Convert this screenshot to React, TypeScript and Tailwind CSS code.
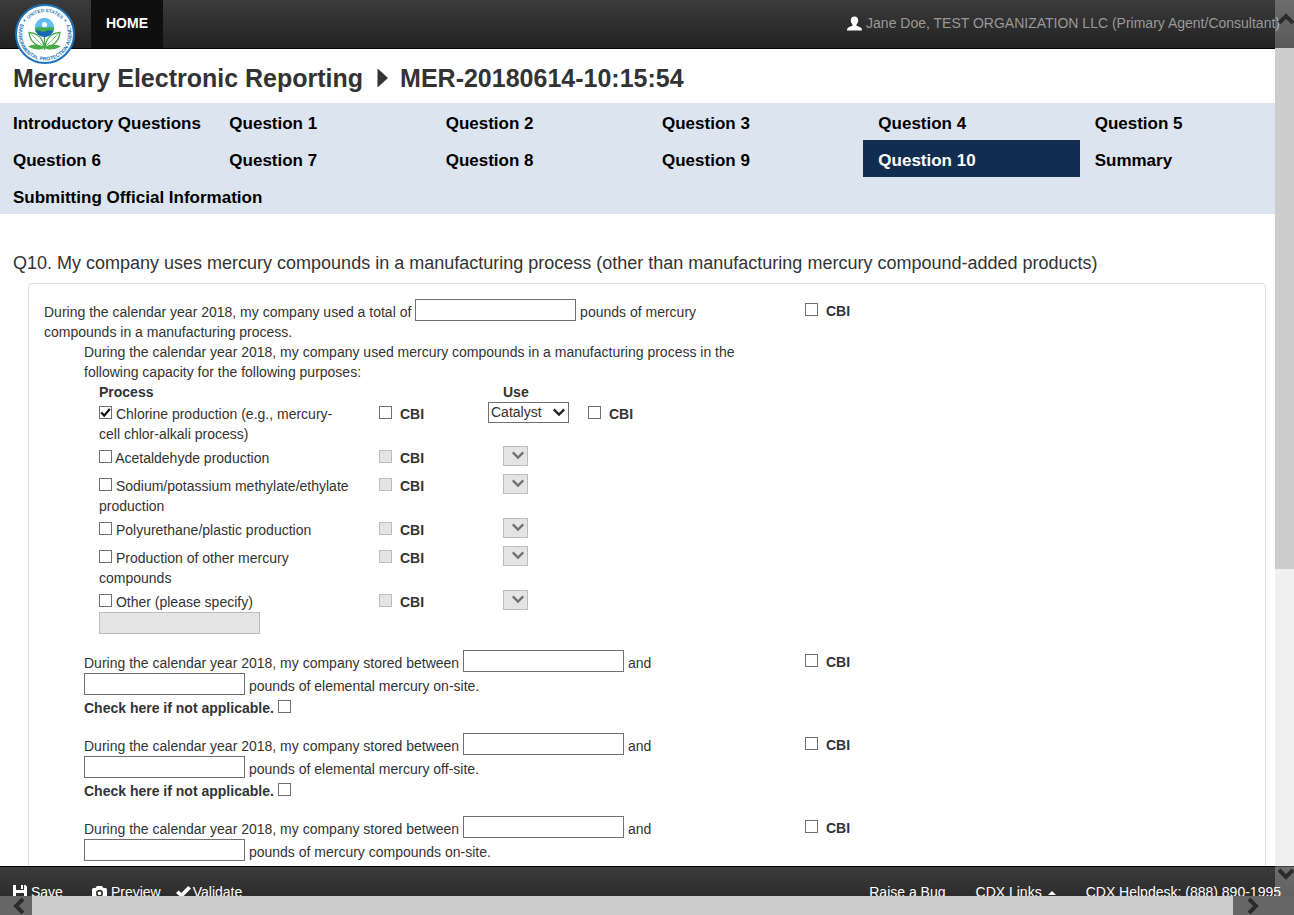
import type { ReactNode } from "react";

interface ProcessRow {
  id: string;
  label: string;
  use?: string;
  specify?: boolean;
}

interface StorageRow {
  id: string;
  text: string;
  optional?: boolean;
}

const NAV_ITEMS = [
  "Introductory Questions",
  "Question 1",
  "Question 2",
  "Question 3",
  "Question 4",
  "Question 5",
  "Question 6",
  "Question 7",
  "Question 8",
  "Question 9",
  "Question 10",
  "Summary",
  "Submitting Official Information",
];

const ACTIVE_ITEM = "Question 10";

const PROCESSES: ProcessRow[] = [
  { id: "chlorine", label: "Chlorine production (e.g., mercury-cell chlor-alkali process)", use: "Catalyst" },
  { id: "acetaldehyde", label: "Acetaldehyde production" },
  { id: "methylate", label: "Sodium/potassium methylate/ethylate production" },
  { id: "polyurethane", label: "Polyurethane/plastic production" },
  { id: "compounds", label: "Production of other mercury compounds" },
  { id: "other", label: "Other (please specify)", specify: true },
];

const STORAGE: StorageRow[] = [
  { id: "elemental-on", text: "pounds of elemental mercury on-site.", optional: true },
  { id: "elemental-off", text: "pounds of elemental mercury off-site.", optional: true },
  { id: "compounds-on", text: "pounds of mercury compounds on-site." },
];

const BAR = "bg-linear-to-b from-[#3c3c3c] to-[#222222]";

function Logo() {
  return (
    <svg viewBox="0 0 60 60" className="size-15" role="img" aria-label="United States Environmental Protection Agency">
      <defs>
        <path id="seal-top" d="M8 30 A22 22 0 0 1 52 30" />
        <path id="seal-bottom" d="M14.6 8.5 A26.5 26.5 0 1 0 45.4 8.5" />
        <clipPath id="seal-globe">
          <circle cx="29.5" cy="23.5" r="9.7" />
        </clipPath>
      </defs>
      <circle cx="30" cy="30" r="29" fill="#fff" stroke="#1c74bc" strokeWidth="2" />
      <g fill="#2878b8" fontFamily="Liberation Sans, Arial, sans-serif" fontWeight="700">
        <text fontSize="4.7">
          <textPath href="#seal-top" startOffset="50%" textAnchor="middle">UNITED STATES</textPath>
        </text>
        <text fontSize="5.2">
          <textPath href="#seal-bottom" startOffset="50%" textAnchor="middle">ENVIRONMENTAL PROTECTION AGENCY</textPath>
        </text>
        <circle cx="9.5" cy="16.5" r="1" />
        <circle cx="50.5" cy="16.5" r="1" />
      </g>
      <g clipPath="url(#seal-globe)">
        <rect x="19" y="13" width="21" height="21" fill="#62bdf0" />
        <path d="M19 24 L25 23 L30 24 L35 23 L40 24 V28 H19 Z" fill="#45aa48" />
        <path d="M19 27 Q22 25.5 25 27 T31 27 T37 27 T43 27 V34 H19 Z" fill="#1468b5" />
      </g>
      <circle cx="29.5" cy="20.5" r="2.6" fill="#fff" />
      <g fill="#fff" stroke="#45aa48" strokeWidth="1.3">
        <path d="M29 43 C19 42 15 36 14 28.5 C23 29 28 35 29 43 Z" />
        <path d="M30 43 C40 42 44 36 45 28.5 C36 29 31 35 30 43 Z" />
        <path d="M16 30 L29 43 M43 30 L30 43" strokeWidth="0.7" />
      </g>
      <path d="M29.5 44 C25 39.5 18 39.5 13 42.5 C19 46 25 46.5 29.5 44 C34 46.5 40 46 46 42.5 C41 39.5 34 39.5 29.5 44 Z" fill="#45aa48" />
      <path d="M29.5 33 V46" stroke="#45aa48" strokeWidth="1.4" />
    </svg>
  );
}

function UserIcon() {
  return (
    <svg viewBox="0 0 15 15" className="h-[15px] w-[15px]" fill="#fff" aria-hidden="true">
      <path d="M7.5 0.5 C9.8 0.5 11.2 2 11.2 4.2 C11.2 6 10.6 7.4 9.5 8.4 V9.8 C11.2 10.6 13.2 11 14.2 12 C14.8 12.6 15 13.4 15 14.5 H0 C0 13.4 0.2 12.6 0.8 12 C1.8 11 3.8 10.6 5.5 9.8 V8.4 C4.4 7.4 3.8 6 3.8 4.2 C3.8 2 5.2 0.5 7.5 0.5 Z" />
    </svg>
  );
}

function SaveIcon() {
  return (
    <svg viewBox="0 0 14 14" className="size-3.5" fill="#fff" aria-hidden="true">
      <path fillRule="evenodd" d="M0 0 H3 V5 H11 V0 H12.5 L14 1.5 V14 H0 Z M8 0 H10 V4 H8 Z M3 8 H11 V14 H3 Z" />
    </svg>
  );
}

function CameraIcon() {
  return (
    <svg viewBox="0 0 15 13" className="h-[13px] w-[15px]" fill="#fff" aria-hidden="true">
      <path
        fillRule="evenodd"
        d="M5 0 H10 L11.5 2 H13.5 Q15 2 15 3.5 V11.5 Q15 13 13.5 13 H1.5 Q0 13 0 11.5 V3.5 Q0 2 1.5 2 H3.5 Z M7.5 3.8 A3.5 3.5 0 1 0 7.5 10.8 A3.5 3.5 0 1 0 7.5 3.8 Z M7.5 5.4 A1.9 1.9 0 1 1 7.5 9.2 A1.9 1.9 0 1 1 7.5 5.4 Z"
      />
    </svg>
  );
}

function CheckIcon() {
  return (
    <svg viewBox="0 0 15 12" className="h-3 w-[15px]" fill="#fff" aria-hidden="true">
      <path d="M0 7 L2.6 4.4 L5.4 7 L12.2 0 L15 2.6 L5.6 12 Z" />
    </svg>
  );
}

function Chevron({ className, d, width = 4 }: { className: string; d: string; width?: number }) {
  return (
    <svg viewBox="0 0 16 16" className={className} fill="none" stroke="currentColor" strokeWidth={width} aria-hidden="true">
      <path d={d} />
    </svg>
  );
}

function Checkbox({ checked, disabled }: { checked?: boolean; disabled?: boolean }) {
  return (
    <span className="relative inline-block size-[13px] overflow-hidden">
      <input
        type="checkbox"
        defaultChecked={checked}
        disabled={disabled}
        className="peer block size-[13px] appearance-none border border-[#707070] bg-white disabled:border-[#bcbcbc] disabled:bg-[#e4e4e4]"
      />
      <svg
        viewBox="0 0 13 13"
        className="pointer-events-none absolute inset-0 hidden size-[13px] peer-checked:block"
        fill="none"
        stroke="#111"
        strokeWidth="2.2"
        aria-hidden="true"
      >
        <path d="M2.2 6.4 L5.2 9.6 L10.8 3" />
      </svg>
    </span>
  );
}

function Cbi({ disabled }: { disabled?: boolean }) {
  return (
    <label className="block leading-5 font-bold whitespace-nowrap">
      <Checkbox disabled={disabled} />
      <span className="ml-2">CBI</span>
    </label>
  );
}

function PoundsInput({ label, disabled }: { label: string; disabled?: boolean }) {
  return (
    <input
      type="text"
      aria-label={label}
      disabled={disabled}
      className="h-[22px] w-[161px] border border-[#707070] bg-white px-1 pt-[3px] align-baseline disabled:border-[#bcbcbc] disabled:bg-[#e4e4e4]"
    />
  );
}

function UseSelect({ value }: { value?: string }) {
  if (!value) {
    return (
      <span className="relative ml-[15px] block h-5 w-[25px]">
        <select aria-label="Use" disabled className="block h-5 w-[25px] appearance-none border border-[#bcbcbc] bg-[#e4e4e4]" />
        <Chevron className="pointer-events-none absolute top-[3px] right-1 size-3 text-[#707070]" d="M1 4.5 L8 11.5 L15 4.5" width={3} />
      </span>
    );
  }
  return (
    <span className="relative block h-[21px] w-[81px]">
      <select
        aria-label="Use"
        defaultValue={value}
        className="block h-[21px] w-[81px] appearance-none border border-[#707070] bg-white pl-0.5 leading-[18px]"
      >
        <option>{value}</option>
      </select>
      <Chevron className="pointer-events-none absolute top-1 right-1 size-3 text-[#222]" d="M1 4.5 L8 11.5 L15 4.5" width={3} />
    </span>
  );
}

function FormRow({ children }: { children: ReactNode }) {
  return (
    <div className="flex gap-[60px]">
      <div className="w-[701px] shrink-0">{children}</div>
      <div className="pt-0.5">
        <Cbi />
      </div>
    </div>
  );
}

function ScrollBars() {
  return (
    <div aria-hidden="true" className="pointer-events-none text-[#2b2b2b]">
      <div className="absolute top-0 right-0 bottom-[19px] z-20 flex w-[19px] flex-col">
        <div className="flex h-12 justify-end bg-white/25 pt-[11px]">
          <Chevron className="size-4" d="M1 12 L8 5 L15 12" />
        </div>
        <div className="flex-[521] bg-[#cdcdcd]" />
        <div className="flex-[297] bg-[#f0f0f0]" />
        <div className="flex h-[30px] justify-end bg-white/25">
          <Chevron className="size-4" d="M1 4 L8 11 L15 4" />
        </div>
      </div>
      <div className="absolute inset-x-0 bottom-0 z-20 flex h-[19px] items-center bg-[#666]">
        <div className="flex w-8 justify-center pl-1.5">
          <Chevron className="size-4" d="M12 1 L5 8 L12 15" />
        </div>
        <div className="h-full flex-1 bg-[#cdcdcd]" />
        <div className="w-[61px] pl-3">
          <Chevron className="size-4" d="M4 1 L11 8 L4 15" />
        </div>
      </div>
    </div>
  );
}

export default function App() {
  return (
    <div className="relative flex h-screen flex-col overflow-hidden bg-white font-['Liberation_Sans',Arial,sans-serif] text-sm leading-5 text-[#333]">
      <header className={`relative z-10 flex h-[49px] shrink-0 items-stretch border-b border-black pr-3.5 pl-[15px] ${BAR}`}>
        <a href="#home" className="-mb-5 block w-[76px] pt-1">
          <Logo />
        </a>
        <a href="#home" className="flex items-center bg-[#0f0f0f] px-[15px] pb-0.5 font-bold text-white">
          HOME
        </a>
        <div className="ml-auto flex items-center gap-1 pb-0.5 whitespace-nowrap text-[#999]">
          <UserIcon />
          Jane Doe, TEST ORGANIZATION LLC (Primary Agent/Consultant)
        </div>
      </header>

      <main className="min-h-0 flex-1 overflow-hidden">
        <h1 className="flex h-[54px] items-center px-[13px] pt-1 text-[25px] leading-[30px] font-bold">
          Mercury Electronic Reporting
          <svg viewBox="0 0 11 20" className="mr-3 ml-3.5 h-5 w-[11px]" fill="#333" aria-hidden="true">
            <path d="M0.5 0.5 L11 10 L0.5 19.5 Z" />
          </svg>
          MER-20180614-10:15:54
        </h1>

        <nav className="bg-[#dce4ef]">
          <ul className="-mx-0.5 grid grid-cols-6 text-[17px] leading-[33px] font-bold text-black">
            {NAV_ITEMS.map((item) => (
              <li key={item} className="whitespace-nowrap">
                <a
                  href="#question"
                  aria-current={item === ACTIVE_ITEM ? "page" : undefined}
                  className={`block h-[37px] px-[15px] pt-1 ${item === ACTIVE_ITEM ? "bg-[#112e51] text-white" : ""}`}
                >
                  {item}
                </a>
              </li>
            ))}
          </ul>
        </nav>

        <h2 className="px-[13px] pt-[37px] pb-2 text-lg leading-6">
          Q10. My company uses mercury compounds in a manufacturing process (other than manufacturing mercury compound-added products)
        </h2>

        <form className="mx-7 rounded border border-[#ddd] px-[15px] pt-[15px] pb-10">
          <FormRow>
            <p>
              During the calendar year 2018, my company used a total of <PoundsInput label="Total pounds used" /> pounds of
              mercury <span>compounds in a manufacturing process.</span>
            </p>
            <div className="pl-10">
              <p>
                During the calendar year 2018, my company used mercury compounds in a manufacturing process in the following
                capacity for the following purposes:
              </p>
              <table className="ml-[15px] table-fixed text-left [&_td]:pt-0.5 [&_td]:align-top">
                <thead>
                  <tr>
                    <th className="w-[280px]">Process</th>
                    <th className="w-[109px]" />
                    <th className="w-[100px] pl-[15px]">Use</th>
                    <th />
                  </tr>
                </thead>
                <tbody>
                  {PROCESSES.map((row) => (
                    <tr key={row.id} className="h-7">
                      <td className="pr-7 pb-0.5">
                        <label>
                          <Checkbox checked={!!row.use} /> {row.label}
                        </label>
                        {row.specify && <PoundsInput label="Other process" disabled />}
                      </td>
                      <td>
                        <Cbi disabled={!row.use} />
                      </td>
                      <td className="pt-0!">
                        <UseSelect value={row.use} />
                      </td>
                      <td>{row.use && <Cbi />}</td>
                    </tr>
                  ))}
                </tbody>
              </table>
            </div>
          </FormRow>

          <div className="mt-3.5 flex flex-col gap-[13px]">
            {STORAGE.map((item) => (
              <FormRow key={item.id}>
                <div className="pl-10">
                  <p>
                    During the calendar year 2018, my company stored between <PoundsInput label="Minimum pounds" /> and{" "}
                    <PoundsInput label="Maximum pounds" /> {item.text}
                  </p>
                  {item.optional && (
                    <label className="block pt-0.5 leading-[23px] font-bold">
                      Check here if not applicable. <Checkbox />
                    </label>
                  )}
                </div>
              </FormRow>
            ))}
          </div>
        </form>
      </main>

      <footer className={`flex h-[49px] shrink-0 border-t border-black px-[13px] pt-[15px] whitespace-nowrap text-white ${BAR}`}>
        <button type="button" className="flex h-5 items-center gap-1">
          <SaveIcon />
          Save
        </button>
        <button type="button" className="ml-[29px] flex h-5 items-center gap-1">
          <CameraIcon />
          Preview
        </button>
        <button type="button" className="ml-[15px] flex h-5 items-center gap-0.5">
          <CheckIcon />
          Validate
        </button>
        <div className="ml-auto flex h-5 gap-[30px]">
          <a href="#bug">Raise a Bug</a>
          <a href="#links" className="flex items-center gap-1.5">
            CDX Links
            <svg viewBox="0 0 8 4" className="mt-0.5 h-1 w-2" fill="#fff" aria-hidden="true">
              <path d="M0 4 L4 0 L8 4 Z" />
            </svg>
          </a>
          <span>CDX Helpdesk: (888) 890-1995</span>
        </div>
      </footer>

      <ScrollBars />
    </div>
  );
}
